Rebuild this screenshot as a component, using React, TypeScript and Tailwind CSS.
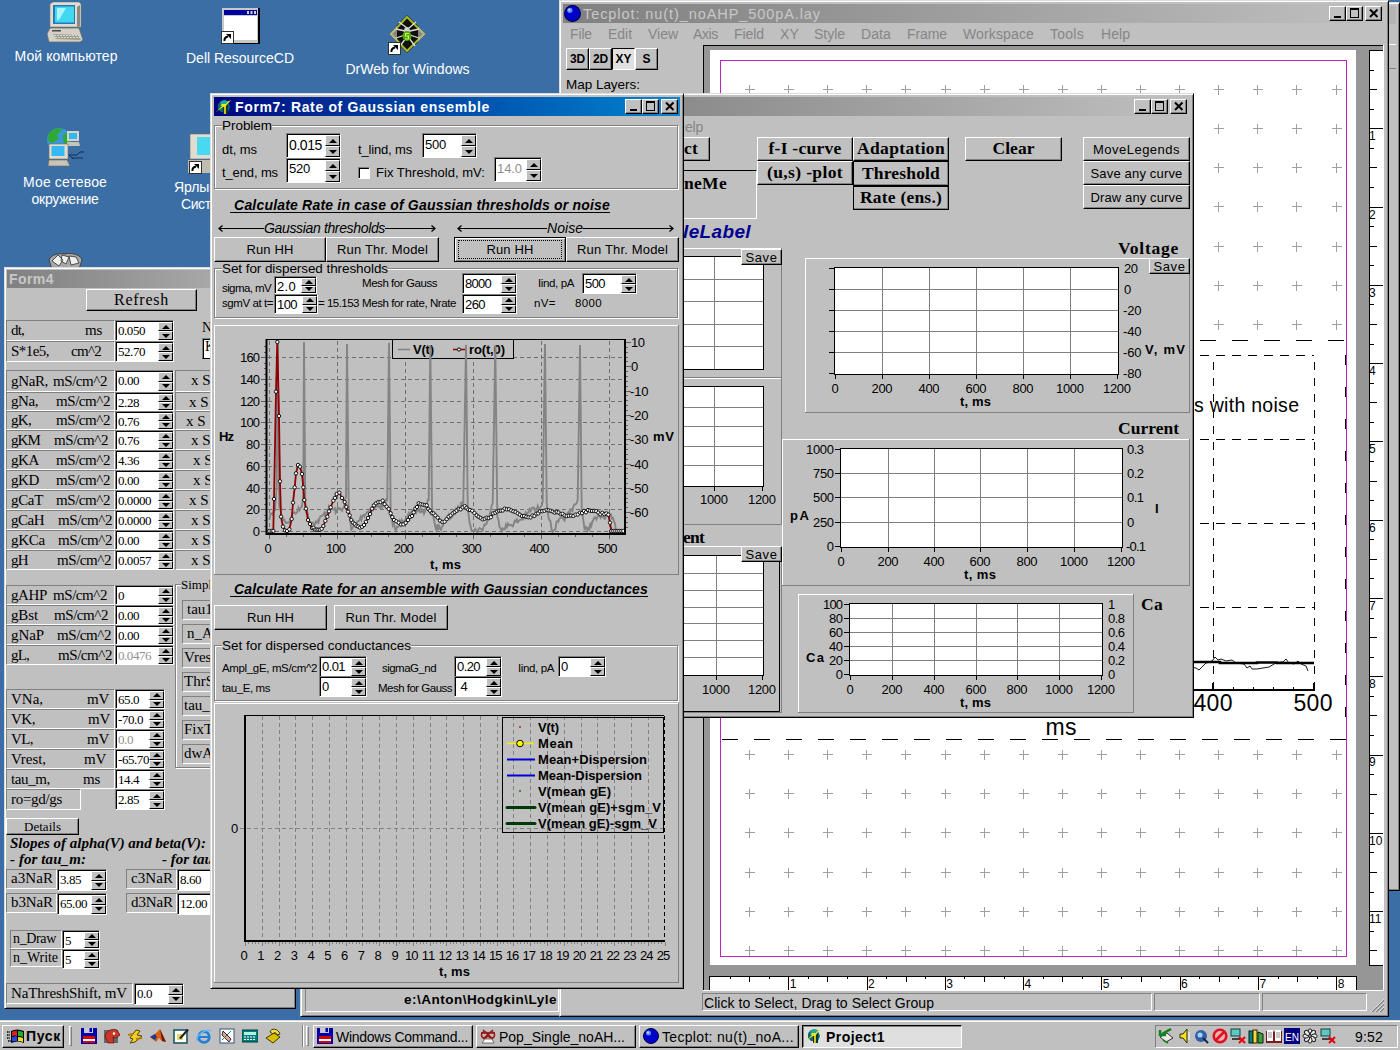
import React, { useLayoutEffect, useRef, useState } from "react";

const RAISED =
  "border border-t-white border-l-white border-r-black border-b-black shadow-[inset_-1px_-1px_0_#808080] bg-[#c0c0c0]";
const SUNK = "border border-t-[#808080] border-l-[#808080] border-r-white border-b-white";
const FRAME =
  "bg-[#c0c0c0] border border-t-[#dcdcdc] border-l-[#dcdcdc] border-r-black border-b-black shadow-[inset_1px_1px_0_#ffffff,inset_-1px_-1px_0_#808080] p-[3px]";

/* Text run whose letter spacing is tuned so that it is exactly w pixels wide. */
function T({ w, c = "", children }: { w?: number; c?: string; children: string }) {
  const ref = useRef<HTMLSpanElement>(null);
  const [ls, setLs] = useState(0);
  useLayoutEffect(() => {
    if (w && ref.current && ls === 0) {
      const nat = ref.current.getBoundingClientRect().width;
      setLs((w - nat) / children.length);
    }
  }, []);
  return (
    <span ref={ref} className={"inline-block flex-none whitespace-pre " + c} style={{ letterSpacing: ls }}>
      {children}
    </span>
  );
}

function Spin({ v, w, c, off = false, tw = "" }: { v: string; w?: number; c: string; off?: boolean; tw?: string }) {
  return (
    <div className={"flex flex-none border border-t-[#808080] border-l-[#808080] border-r-white border-b-white " + c}>
      <div className="flex min-w-0 flex-1 border-t border-l border-black bg-white">
        <div className={"min-w-0 flex-1 pl-px leading-[16px] " + (off ? "text-[#909090] " : "text-black ") + tw}>
          <T w={w}>{v}</T>
        </div>
        <div className="flex w-[15px] flex-none flex-col">
          {["M0 4 L4 0 L8 4Z", "M0 0 L8 0 L4 4Z"].map((d) => (
            <div
              key={d}
              className="flex min-h-0 flex-1 items-center justify-center border border-t-white border-l-white border-r-black border-b-black bg-[#c0c0c0]"
            >
              <svg width="8" height="4" viewBox="0 0 8 4">
                <path d={d} fill="#000" />
              </svg>
            </div>
          ))}
        </div>
      </div>
    </div>
  );
}

function Btn({ c, t, w, tc = "" }: { c: string; t: string; w?: number; tc?: string }) {
  return (
    <div className={"flex flex-none items-center justify-center " + RAISED + " " + c}>
      <T w={w} c={tc}>
        {t}
      </T>
    </div>
  );
}

function WinButtons({ c = "" }: { c?: string }) {
  const b = "flex h-[15px] w-[17px] items-center justify-center " + RAISED;
  return (
    <div className={"ml-auto flex flex-none items-center " + c}>
      <div className={b}>
        <svg width="12" height="11" viewBox="0 0 12 11" shapeRendering="crispEdges">
          <rect x="2" y="8" width="7" height="2" />
        </svg>
      </div>
      <div className={b}>
        <svg width="12" height="11" viewBox="0 0 12 11" shapeRendering="crispEdges">
          <path d="M1 0h9v10h-9zM2 2v7h7v-7z" fillRule="evenodd" />
        </svg>
      </div>
      <div className={"ml-[2px] " + b}>
        <svg width="12" height="11" viewBox="0 0 12 11">
          <path d="M2 1.500L9.500 9M9.500 1.500L2 9" stroke="#000" strokeWidth="2" />
        </svg>
      </div>
    </div>
  );
}

function Group({ t, w, c, children }: { t: string; w: number; c: string; children: React.ReactNode }) {
  return (
    <div
      className={
        "relative flex-none border border-[#808080] shadow-[1px_1px_0_#ffffff,inset_1px_1px_0_#ffffff] " + c
      }
    >
      <div className="absolute -top-[6px] left-[7px] bg-[#c0c0c0] text-[13.5px] leading-[12px]">
        <T w={w}>{t}</T>
      </div>
      {children}
    </div>
  );
}

/* ---------- svg helpers ---------- */
type L = [number, number, string, number?];
function Labels({ items, size = 13, anchor = "middle", bold = false }: { items: L[]; size?: number; anchor?: "middle" | "start" | "end"; bold?: boolean }) {
  return (
    <>
      {items.map(([x, y, s, w], i) => (
        <text
          key={i}
          x={x}
          y={y}
          fontSize={size}
          fontWeight={bold ? 700 : 400}
          textAnchor={anchor}
          textLength={w}
          lengthAdjust="spacing"
        >
          {s}
        </text>
      ))}
    </>
  );
}

function Plot(p: {
  box: [number, number, number, number];
  plot: [number, number, number, number];
  vx: number[];
  hy: number[];
  children?: React.ReactNode;
  xt?: number[];
  yt?: number[];
  c?: string;
}) {
  const [ox, oy, w, h] = p.box;
  const [x1, y1, x2, y2] = p.plot;
  return (
    <svg className={"block flex-none " + (p.c ?? "")} width={w} height={h} viewBox={`${ox} ${oy} ${w} ${h}`}>
      <g shapeRendering="crispEdges">
        <path d={`M${ox + 0.5} ${oy + h}V${oy + 0.5}H${ox + w}`} fill="none" stroke="#fff" />
        <path d={`M${ox} ${oy + h - 0.5}H${ox + w - 0.5}V${oy}`} fill="none" stroke="#808080" />
        <rect x={x1 + 0.5} y={y1 + 0.5} width={x2 - x1} height={y2 - y1} fill="#fff" stroke="#000" />
        {p.vx.map((x) => (
          <path key={x} d={`M${x + 0.5} ${y1 + 1}V${y2}`} stroke="#808080" />
        ))}
        {p.hy.map((y) => (
          <path key={y} d={`M${x1 + 1} ${y + 0.5}H${x2}`} stroke="#808080" />
        ))}
        {(p.xt ?? []).map((x) => (
          <path key={x} d={`M${x + 0.5} ${y2}V${y2 + 5}`} stroke="#000" />
        ))}
        {(p.yt ?? []).map((y) => (
          <path key={y} d={`M${x1} ${y + 0.5}H${x1 - 5}`} stroke="#000" />
        ))}
      </g>
      {p.children}
    </svg>
  );
}

/* ---------- icons ---------- */
const Ball = ({ s = 16 }: { s?: number }) => (
  <svg width={s} height={s} viewBox="0 0 16 16" className="flex-none">
    <circle cx="8" cy="8" r="7.500" fill="#0000c8" stroke="#000040" />
    <circle cx="5.500" cy="5" r="2.500" fill="#5a8cff" />
    <circle cx="5" cy="4.500" r="1" fill="#d0e0ff" />
  </svg>
);
const Delphi = () => (
  <svg width="16" height="16" viewBox="0 0 16 16" className="flex-none">
    <path d="M2 6C3 2 8 0 12 3L14 8 12 13H5L2 10z" fill="#0a6a6a" />
    <path d="M7 4h5v11H7z" fill="#083830" />
    <path d="M8 3h2v12H8z" fill="#d8c020" />
    <path d="M0 13L6 7 4 6 15 1 9 8 7 8z" fill="#e8e820" />
    <path d="M4 3l4-2 4 1-2 3H5z" fill="#20a8a0" />
  </svg>
);
const Floppy = () => (
  <svg width="16" height="16" viewBox="0 0 16 16" className="flex-none">
    <path d="M0 0h3v5h9V0h4v16H0z" fill="#0000a8" />
    <rect x="4" y="0" width="8" height="5" fill="#c8c8d8" />
    <rect x="8.500" y="0" width="2.500" height="4" fill="#0000a8" />
    <rect x="2" y="8" width="12" height="7" fill="#fff" />
    <rect x="2" y="8" width="12" height="3" fill="#d80000" />
    <rect x="2" y="13" width="12" height="2" fill="#d80000" />
  </svg>
);
const Monitor = () => (
  <svg width="38" height="41" viewBox="0 0 38 41" className="flex-none">
    <path d="M3 2L6 0H32L34 2V25H3z" fill="#e0ddd0" stroke="#807c70" strokeWidth=".6" />
    <path d="M33 3V24L30 26V5z" fill="#8c8a80" />
    <rect x="6" y="3" width="22" height="19" fill="#2878b8" />
    <rect x="8" y="4.500" width="19" height="16" fill="#40d8f0" />
    <path d="M10 6h9l-7 12h-2z" fill="#a8f4ff" />
    <path d="M3 26H32L36 38 33 40H2L0 32z" fill="#d4d0c8" stroke="#6a675c" strokeWidth=".7" />
    <path d="M6 32L31 33 34 38 9 37z" fill="#a09c90" />
    <path d="M7 33.500H32M8 35.500H33" stroke="#f4f2ec" strokeWidth=".7" strokeDasharray="2 1" />
    <rect x="5" y="28" width="9" height="1.500" fill="#4a4840" />
  </svg>
);
const Shortcut = ({ x, y }: { x: number; y: number }) => (
  <g>
    <rect x={x + 0.5} y={y + 0.5} width="12" height="12" fill="#fff" stroke="#303030" />
    <path d={`M${x + 3.500} ${y + 10}C${x + 3} ${y + 7} ${x + 5} ${y + 6} ${x + 7} ${y + 5.500}`} stroke="#000" strokeWidth="2" fill="none" />
    <path d={`M${x + 5} ${y + 3}H${x + 10}V${y + 8}z`} fill="#000" />
  </g>
);

/* ---------- Form4 ---------- */
function Row4(p: {
  l: string;
  lw: number;
  u?: string;
  uw?: number;
  ur?: number;
  v: string;
  vw: number;
  h: string;
  off?: boolean;
  sw?: string;
  x?: string;
  xp?: string;
  bw?: string;
}) {
  return (
    <div className={"flex flex-none " + p.h}>
      <div className="w-[109px] flex-none">
        <div className={"flex h-full items-center pl-1 " + SUNK + " " + (p.bw ?? "w-[109px]")}>
          <T w={p.lw}>{p.l}</T>
          {p.u && (
            <div className="ml-auto flex">
              <T w={p.uw ?? 54}>{p.u}</T>
              <div style={{ width: 113 - (p.ur ?? 109) }} />
            </div>
          )}
        </div>
      </div>
      <Spin v={p.v} w={p.vw} off={p.off} c={"h-full " + (p.sw ?? "w-[59px]")} tw="text-[13px] leading-[17px]" />
      {p.x && (
        <div className={"ml-px h-full flex-1 overflow-hidden leading-[18px] " + SUNK + " " + (p.xp ?? "pl-[15px]")}>
          <T>{p.x}</T>
        </div>
      )}
    </div>
  );
}

function Form4() {
  return (
    <div className={"absolute left-[4px] top-[267px] flex h-[742px] w-[292px] flex-col font-['Liberation_Serif',serif] text-[15px] " + FRAME + " !p-px"}>
      <div className="mx-px mt-px flex h-[18px] flex-none items-center bg-linear-to-r from-[#808080] to-[#b8b8b8] pl-[2px] font-['Liberation_Sans',sans-serif] text-[14px] font-bold text-[#c8c8c8]">
        <T w={45}>Form4</T>
      </div>
      <Btn c="ml-[80px] mt-[1px] h-[22px] w-[111px]" t="Refresh" w={55} tc="text-[16px]" />
      <div className="mt-[9px] flex">
        <div className="w-[168px] flex-none">
          <Row4 l="dt," lw={13} u="ms" uw={17} ur={101} v="0.050" vw={27} h="h-[21px]" />
          <Row4 l="S*1e5," lw={38} u="cm^2" uw={30} ur={100} v="52.70" vw={27} h="h-[21px]" />
        </div>
        <div className="ml-[28px] flex w-[80px] flex-col leading-[16px]">
          <span className="text-[14px]">NaK</span>
          <div className="mt-[2px] h-[21px] border border-t-[#808080] border-l-[#808080] bg-white pl-[2px] text-[14px] shadow-[inset_1px_1px_0_#000000]">K</div>
        </div>
      </div>
      <div className="mt-[8px] flex flex-col">
        <Row4 l="gNaR," lw={37} u="mS/cm^2" ur={106} v="0.00" vw={21} h="h-[22px]" x="x S" />
        <Row4 l="gNa," lw={27} u="mS/cm^2" v="2.28" vw={21} h="h-[19px]" x="x S" xp="pl-[13px]" />
        <Row4 l="gK," lw={20} u="mS/cm^2" v="0.76" vw={21} h="h-[19px]" x="x S =" xp="pl-[10px]" />
        <Row4 l="gKM" lw={29} u="mS/cm^2" ur={107} v="0.76" vw={21} h="h-[20px]" x="x S" />
        <Row4 l="gKA" lw={28} u="mS/cm^2" v="4.36" vw={21} h="h-[20px]" x="x S" xp="pl-[17px]" />
        <Row4 l="gKD" lw={28} u="mS/cm^2" v="0.00" vw={21} h="h-[20px]" x="x S" xp="pl-[17px]" />
        <Row4 l="gCaT" lw={32} u="mS/cm^2" v="0.0000" vw={33} h="h-[20px]" x="x S" xp="pl-[13px]" />
        <Row4 l="gCaH" lw={33} u="mS/cm^2" ur={111} v="0.0000" vw={33} h="h-[20px]" x="x S" />
        <Row4 l="gKCa" lw={34} u="mS/cm^2" ur={111} v="0.00" vw={21} h="h-[20px]" x="x S" />
        <Row4 l="gH" lw={17} u="mS/cm^2" ur={110} v="0.0057" vw={33} h="h-[20px]" x="x S" />
      </div>
      <div className="mt-[7px] flex h-[240px] flex-none">
        <div className="w-[168px] flex-none pt-[8px]">
          <Row4 l="gAHP" lw={36} u="mS/cm^2" ur={106} v="0" vw={7} h="h-[20px]" />
          <Row4 l="gBst" lw={27} u="mS/cm^2" ur={107} v="0.00" vw={21} h="h-[20px]" />
          <Row4 l="gNaP" lw={33} u="mS/cm^2" ur={110} v="0.00" vw={21} h="h-[20px]" />
          <Row4 l="gL," lw={18} u="mS/cm^2" ur={111} v="0.0476" vw={33} h="h-[20px]" off />
          <div className="h-[24px]" />
          <Row4 l="VNa," lw={32} u="mV" uw={22} ur={108} v="65.0" vw={21} h="h-[20px]" sw="w-[50px]" />
          <Row4 l="VK," lw={24} u="mV" uw={22} v="-70.0" vw={25} h="h-[20px]" sw="w-[50px]" />
          <Row4 l="VL," lw={22} u="mV" uw={22} ur={108} v="0.0" vw={15} h="h-[20px]" sw="w-[50px]" off />
          <Row4 l="Vrest," lw={35} u="mV" uw={22} ur={105} v="-65.70" vw={31} h="h-[20px]" sw="w-[50px]" />
          <Row4 l="tau_m," lw={39} u="ms" uw={17} ur={99} v="14.4" vw={21} h="h-[20px]" sw="w-[50px]" />
          <Row4 l="ro=gd/gs" lw={51} v="2.85" vw={21} h="h-[21px]" sw="w-[50px]" bw="w-[75px]" />
        </div>
        <div className="relative ml-px mt-[7px] flex h-[184px] w-[100px] flex-col border border-[#808080] pl-[6px] pt-[15px] shadow-[inset_1px_1px_0_#ffffff,1px_1px_0_#ffffff]">
          <span className="absolute -top-[9px] left-[5px] bg-[#c0c0c0] text-[13px] leading-[18px]">Simpl</span>
          {["tau1", "n_A", "Vrest", "ThrS", "tau_", "FixThr", "dwA"].map((s, i) => (
            <div key={s} className={"mb-[4px] h-[20px] flex-none leading-[16px] " + SUNK + (i < 2 ? " pl-[4px]" : " pl-px")}>
              <T>{s}</T>
            </div>
          ))}
        </div>
      </div>
      <Btn c="mt-[1px] h-[17px] w-[73px]" t="Details" w={37} tc="text-[13px]" />
      <div className="pl-1 font-bold italic leading-[16px]">
        <T w={196}>Slopes of alpha(V) and beta(V):</T>
      </div>
      <div className="mb-[2px] flex pl-1 font-bold italic leading-[16px]">
        <T w={76}>- for tau_m:</T>
        <T c="ml-[76px]">- for tau_h:</T>
      </div>
      {[
        ["a3NaR", "3.85", 21, "c3NaR", "8.60", 21],
        ["b3NaR", "65.00", 27, "d3NaR", "12.00", 27],
      ].map((r) => (
        <div key={r[0] as string} className="mb-[2px] flex h-[22px] flex-none">
          <div className={"h-[20px] w-[51px] pl-1 leading-[17px] " + SUNK}>
            <T w={42}>{r[0] as string}</T>
          </div>
          <Spin v={r[1] as string} w={r[2] as number} c="h-full w-[50px]" tw="text-[13px] !leading-[18px]" />
          <div className={"ml-[19px] h-[20px] w-[51px] pl-1 leading-[17px] " + SUNK}>
            <T w={42}>{r[3] as string}</T>
          </div>
          <Spin v={r[4] as string} w={r[5] as number} c="h-full w-[50px]" tw="text-[13px] !leading-[18px]" />
        </div>
      ))}
      <div className="ml-1 mt-[13px] flex flex-col text-[14px]">
        <div className="flex h-[19px]">
          <div className={"h-[19px] w-[52px] pl-[2px] leading-[16px] " + SUNK}>
            <T w={43}>n_Draw</T>
          </div>
          <Spin v="5" c="h-full w-[38px]" tw="text-[13px] !leading-[18px]" />
        </div>
        <div className="flex h-[20px]">
          <div className={"h-[18px] w-[52px] pl-[2px] leading-[15px] " + SUNK}>
            <T w={45}>n_Write</T>
          </div>
          <Spin v="5" c="h-full w-[38px]" tw="text-[13px] !leading-[18px]" />
        </div>
      </div>
      <div className="mt-[14px] flex h-[22px]">
        <div className={"h-[21px] w-[127px] pl-1 leading-[18px] " + SUNK}>
          <T w={116}>NaThreshShift, mV</T>
        </div>
        <Spin v="0.0" w={15} c="ml-px h-full w-[50px]" tw="text-[13px] !leading-[18px]" />
      </div>
    </div>
  );
}

/* ---------- Tecplot ---------- */
const MENU: [string, number][] = [
  ["File", 38], ["Edit", 40], ["View", 45], ["Axis", 41], ["Field", 46], ["XY", 34], ["Style", 47], ["Data", 46], ["Frame", 56], ["Workspace", 87], ["Tools", 51], ["Help", 40],
];
const MENUW = [22, 24, 30, 25, 30, 19, 31, 30, 40, 71, 34, 29];

function Canvas() {
  const cross: React.ReactNode[] = [];
  for (let r = 0; r < 23; r++)
    for (let c = 0; c < 16; c++) {
      const x = Math.round(749 + c * 39.1) + 0.5;
      const y = Math.round(89 + r * 39.13) + 0.5;
      if (y > 340 && y < 738) continue;
      cross.push(<path key={r + "-" + c} d={`M${x - 5} ${y}h10M${x} ${y - 5}v10`} />);
    }
  const vt: React.ReactNode[] = [];
  for (let i = 0; i <= 46; i++) {
    const y = Math.round(50 + i * 19.57) + 0.5;
    const len = i % 4 === 0 ? 13 : i % 2 === 0 ? 7 : 4;
    if (i && y < 964) vt.push(<path key={i} d={`M1370 ${y}h${len}`} />);
  }
  const ht: React.ReactNode[] = [];
  for (let i = 1; i <= 32; i++) {
    const x = Math.round(710 + i * 19.57) + 0.5;
    const len = i % 4 === 0 ? 14 : i % 2 === 0 ? 6 : 3;
    ht.push(<path key={i} d={`M${x} 976v${len}`} />);
  }
  return (
    <svg className="block flex-none" width="681" height="946" viewBox="703 45 681 946">
      <rect x="703" y="45" width="681" height="946" fill="#969696" />
      <path d="M703.500 991V45.500H1384" fill="none" stroke="#000" shapeRendering="crispEdges" />
      <rect x="710" y="50" width="646" height="915" fill="#fff" />
      <g stroke="#a0a0a0" shapeRendering="crispEdges">{cross}</g>
      <g shapeRendering="crispEdges" fill="none" stroke="#000">
        <path d="M721 340.500H1346" strokeDasharray="16 16" strokeDashoffset="1" />
        <path d="M722 739.500H1346" strokeDasharray="16 16" />
        <path d="M1345.500 355V737M720.500 718V737" strokeDasharray="10 22" />
        <path d="M1184 355.500H1314M1184 439.500H1314M1184 523.500H1314M1184 607.500H1314" strokeDasharray="9 7" />
        <path d="M1213.500 362V690M1314.500 362V690" strokeDasharray="8 8" />
        <path d="M1180 690H1315" strokeWidth="2" />
        <path d="M1213 683v7M1314 683v7" strokeWidth="2" />
        <path d="M1233.500 687v3M1253.500 687v3M1273.500 687v3M1293.500 687v3" />
      </g>
      <rect x="720.500" y="60.500" width="626" height="896" fill="none" stroke="#c020c0" shapeRendering="crispEdges" />
      <path d="M1180 662H1220V663H1257V662.500H1277V663H1314" fill="none" stroke="#000" strokeWidth="2.600" />
      <path
        d="M1190 667l6 1 3 2 4-4 3-3 4-1 3-2 2-3 3 3 3-1 5 2 6-1 4 3 8 1 3 4 3-2 2 3 5 0 6-1 6-1 5-3 6-2 3 0 3-3 3 4 5 1 4-3 3 3 5 2 2 5"
        fill="none"
        stroke="#000"
        strokeWidth=".9"
      />
      <text x="1194" y="411.500" fontSize="19.500" textLength="105" lengthAdjust="spacing">s with noise</text>
      <text x="1213" y="711" fontSize="23" textAnchor="middle" textLength="39">400</text>
      <text x="1313" y="711" fontSize="23" textAnchor="middle" textLength="39">500</text>
      <text x="1061" y="735" fontSize="23" textAnchor="middle" textLength="31">ms</text>
      <rect x="1370" y="51" width="14" height="914" fill="#fff" />
      <rect x="710" y="976" width="647" height="14" fill="#fff" />
      <g stroke="#000" fill="none" shapeRendering="crispEdges">
        <path d="M1384 50.500H1369.500V965.500H1384" />
        <path d="M709.500 990V976.500H1356.500V990" />
        {vt}
        {ht}
      </g>
      {[1, 2, 3, 4, 5, 6, 7, 8, 9, 10, 11].map((n) => (
        <text key={n} x="1369" y={62 + n * 78.27} fontSize="12">{n}</text>
      ))}
      {[1, 2, 3, 4, 5, 6, 7, 8].map((n) => (
        <text key={n} x={711.500 + n * 78.27} y="988" fontSize="12">{n}</text>
      ))}
      <path d="M1383.500 45V991M703 990.500H1384" stroke="#fff" shapeRendering="crispEdges" />
    </svg>
  );
}

function Tecplot() {
  return (
    <div className={"absolute left-[559px] top-0 flex h-[1017px] w-[830px] flex-col " + FRAME}>
      <div className="flex h-[19px] flex-none items-center bg-linear-to-r from-[#808080] to-[#c0c0c0] pl-px pr-[3px] text-[#c8c8c8]">
        <Ball s={17} />
        <T w={238} c="ml-[2px] pt-px text-[14.5px]">Tecplot: nu(t)_noAHP_500pA.lay</T>
        <WinButtons />
      </div>
      <div className="flex h-[22px] flex-none items-center pb-px pl-[7px] text-[14px] text-[#868686]">
        {MENU.map(([m, w], i) => (
          <div key={m} className="flex-none" style={{ width: w }}>
            <T w={MENUW[i]}>{m}</T>
          </div>
        ))}
      </div>
      <div className="flex h-[946px] flex-none">
        <div className="w-[140px] flex-none pl-[3px] pt-[3px]">
          <div className="flex text-[12px] font-bold">
            <Btn c="h-[22px] w-[23px]" t="3D" w={15} />
            <Btn c="h-[22px] w-[23px]" t="2D" w={15} />
            <div className="flex h-[22px] w-[23px] items-center justify-center border border-t-black border-l-black border-r-white border-b-white bg-[#e0e0e0]">
              <T w={16}>XY</T>
            </div>
            <Btn c="h-[22px] w-[23px]" t="S" />
          </div>
          <div className="mt-[7px] pt-px text-[13.5px]">
            <T w={74}>Map Layers:</T>
          </div>
        </div>
        <Canvas />
      </div>
      <div className="flex min-h-0 flex-1 pb-[2px] pl-[139px] pt-[2px]">
        <div className={"w-[450px] pl-px text-[14px] leading-[19px] " + SUNK}>
          <T w={230}>Click to Select, Drag to Select Group</T>
        </div>
        <div className={"ml-[2px] w-[106px] " + SUNK} />
        <div className={"ml-[2px] w-[105px] " + SUNK} />
        <svg width="14" height="14" viewBox="0 0 14 14" className="ml-[3px] mt-[5px]">
          <path d="M2 14L14 2M6 14L14 6M10 14L14 10" stroke="#808080" strokeWidth="1.500" />
          <path d="M1 14L14 1M5 14L14 5M9 14L14 9" stroke="#fff" strokeWidth=".6" />
        </svg>
      </div>
    </div>
  );
}

/* ---------- Project1 ---------- */
function Project1() {
  const sb = "absolute h-[16px] w-[41px]";
  const serifB = "font-['Liberation_Serif',serif] text-[17.5px] font-bold";
  return (
    <div className={"absolute left-[560px] top-[93px] flex h-[625px] w-[634px] flex-col " + FRAME}>
      <div className="flex h-[19px] flex-none items-center bg-linear-to-r from-[#808080] to-[#c0c0c0] pr-[3px]">
        <WinButtons />
      </div>
      <div className="flex h-[21px] flex-none items-center pl-[111px] text-[14px] text-[#868686]">
        <T w={28}>Help</T>
      </div>
      <div className={"flex h-[103px] flex-none " + serifB}>
        <div className="flex w-[193px] flex-none flex-col">
          <div className={"flex h-[24px] w-[146px] flex-none items-center justify-end pr-[11px] " + RAISED}>
            <T w={14}>ct</T>
          </div>
          <div className="mt-[9px] h-[49px] flex-none border border-t-black border-r-white border-b-white pl-[119px] leading-[24px]">
            <T w={43}>neMe</T>
          </div>
          <div className="mt-[3px] pl-[119px] font-['Liberation_Sans',sans-serif] text-[19px] italic leading-[20px] text-[#000090]">
            <T w={68}>leLabel</T>
          </div>
        </div>
        <div>
          <Btn c="h-[24px] w-[96px]" t="f-I -curve" w={73} />
          <Btn c="h-[24px] w-[96px]" t="(u,s) -plot" w={76} />
        </div>
        <div>
          <Btn c="h-[24px] w-[96px]" t="Adaptation" w={88} />
          <Btn c="h-[25px] w-[96px] !border-black" t="Threshold" w={78} />
          <Btn c="h-[24px] w-[96px] !border-black" t="Rate (ens.)" w={82} />
        </div>
        <Btn c="ml-[16px] h-[24px] w-[97px]" t="Clear" w={42} />
        <div className="ml-[21px] font-['Liberation_Sans',sans-serif] text-[13px] font-normal">
          <Btn c="h-[24px] w-[107px]" t="MoveLegends" w={87} />
          <Btn c="h-[24px] w-[107px]" t="Save any curve" w={92} />
          <Btn c="h-[24px] w-[107px]" t="Draw any curve" w={92} />
        </div>
      </div>
      <div className="flex flex-none">
        <div className="w-[218px] flex-none pt-[8px]">
          <div className="relative">
            <Plot box={[564, 248, 218, 130]} plot={[600, 256, 763, 369]} vx={[714]} hy={[279, 301, 324, 346]} />
            <Btn c={sb + " right-0 top-[1px]"} t="Save" w={32} />
          </div>
          <Plot box={[564, 378, 218, 147]} plot={[600, 386, 763, 486]} vx={[714]} hy={[407, 426, 446, 465]} xt={[714, 762]}>
            <Labels items={[[714, 504, "1000", 28], [762, 504, "1200", 28]]} />
          </Plot>
          <div className={"h-[21px] pl-[119px] leading-[24px] " + serifB}>
            <T w={21}>ent</T>
          </div>
          <div className="relative">
            <Plot box={[564, 546, 218, 167]} plot={[600, 555, 763, 675]} vx={[716]} hy={[573, 590, 607, 623, 640, 657]} xt={[716, 762]}>
              <path d="M600 711.500H779.500V560" stroke="#000" fill="none" />
              <Labels items={[[716, 694, "1000", 28], [762, 694, "1200", 28]]} />
            </Plot>
            <Btn c={sb + " right-0 top-[0px]"} t="Save" w={32} />
          </div>
        </div>
        <div className="w-[408px] flex-none">
          <div className={"h-[18px] pl-[336px] leading-[17px] " + serifB}>
            <T w={61}>Voltage</T>
          </div>
          <div className="relative">
            <Plot
              c="ml-[23px]"
              box={[805, 258, 385, 155]}
              plot={[834, 267, 1118, 374]}
              vx={[882, 929, 976, 1023, 1070]}
              hy={[289, 310, 331, 352]}
              xt={[835, 882, 929, 976, 1023, 1070, 1117]}
              yt={[268, 289, 310, 331, 352, 373]}
            >
              <Labels items={[[835, 393, "0"], [882, 393, "200", 21], [929, 393, "400", 21], [976, 393, "600", 21], [1023, 393, "800", 21], [1070, 393, "1000", 28], [1117, 393, "1200", 28]]} />
              <Labels anchor="start" items={[[1124, 273, "20", 14], [1124, 294, "0"], [1123, 315, "-20", 18.500], [1123, 336, "-40", 18.500], [1123, 357, "-60", 18.500], [1123, 378, "-80", 18.500]]} />
              <Labels bold anchor="start" items={[[1145, 354, "V, mV", 40], [960, 406, "t, ms", 31]]} />
            </Plot>
            <Btn c={sb + " right-0 top-0"} t="Save" w={32} />
          </div>
          <div className={"h-[26px] pl-[336px] leading-[30px] " + serifB}>
            <T w={61}>Current</T>
          </div>
          <Plot
            box={[782, 439, 408, 147]}
            plot={[840, 448, 1122, 547]}
            vx={[888, 934, 980, 1027, 1074]}
            hy={[473, 497, 522]}
            xt={[841, 888, 934, 980, 1027, 1074, 1121]}
            yt={[449, 473, 497, 522, 546]}
          >
            <Labels items={[[841, 566, "0"], [888, 566, "200", 21], [934, 566, "400", 21], [980, 566, "600", 21], [1027, 566, "800", 21], [1074, 566, "1000", 28], [1121, 566, "1200", 28]]} />
            <Labels anchor="end" items={[[834, 454, "1000", 28], [834, 478, "750", 21], [834, 502, "500", 21], [834, 527, "250", 21], [834, 551, "0"]]} />
            <Labels anchor="start" items={[[1127, 454, "0.3", 17], [1127, 478, "0.2", 17], [1127, 502, "0.1", 17], [1127, 527, "0"], [1126, 551, "-0.1", 20]]} />
            <Labels bold anchor="start" items={[[790, 520, "pA", 19], [964, 579, "t, ms", 32], [1155, 513, "I"]]} />
          </Plot>
          <div className="mt-[8px] flex pl-[16px]">
            <Plot
              box={[798, 594, 336, 119]}
              plot={[849, 603, 1102, 675]}
              vx={[892, 934, 976, 1017, 1059]}
              hy={[618, 632, 646, 660]}
              xt={[850, 892, 934, 976, 1017, 1059, 1101]}
              yt={[604, 618, 632, 646, 660, 674]}
            >
              <Labels items={[[850, 694, "0"], [892, 694, "200", 21], [934, 694, "400", 21], [976, 694, "600", 21], [1017, 694, "800", 21], [1059, 694, "1000", 28], [1101, 694, "1200", 28]]} />
              <Labels anchor="end" items={[[843, 609, "100", 20], [843, 623, "80", 14], [843, 637, "60", 14], [843, 651, "40", 14], [843, 665, "20", 14], [843, 679, "0"]]} />
              <Labels anchor="start" items={[[1108, 609, "1"], [1108, 623, "0.8", 17], [1108, 637, "0.6", 17], [1108, 651, "0.4", 17], [1108, 665, "0.2", 17], [1108, 679, "0"]]} />
              <Labels bold anchor="start" items={[[806, 662, "Ca", 18], [960, 707, "t, ms", 31]]} />
            </Plot>
            <T w={22} c={"ml-[7px] leading-[20px] " + serifB}>Ca</T>
          </div>
        </div>
      </div>
    </div>
  );
}

/* ---------- Form7 ---------- */
/* Curve knots, in thirds of a pixel from the chart's origin at (210, 320). */
const RO: number[][] = [[178,633],[185,633],[190,633],[192,537],[198,215],[202,66],[207,288],[210,484],[213,590],[219,620],[225,631],[231,633],[238,628],[245,597],[249,548],[254,502],[258,460],[264,435],[270,440],[276,462],[280,502],[283,540],[288,566],[294,600],[300,612],[306,624],[315,629],[330,629],[340,618],[352,590],[362,562],[370,542],[380,522],[388,518],[396,534],[404,546],[414,575],[424,600],[434,612],[450,623],[462,615],[474,594],[486,566],[498,550],[518,542],[530,560],[542,580],[552,600],[566,608],[580,613],[594,600],[606,588],[616,566],[626,550],[650,556],[660,572],[676,586],[690,602],[704,605],[722,586],[740,572],[764,558],[780,570],[800,586],[818,598],[836,594],[856,578],[884,566],[910,574],[936,588],[962,592],[990,574],[1010,570],[1040,576],[1070,588],[1090,588],[1110,578],[1140,572],[1165,578],[1195,584],[1200,608],[1204,633],[1240,633]];
const VT: number[][] = [[178,600],[185,580],[195,570],[200,500],[203,70],[208,560],[220,600],[235,608],[250,580],[262,575],[275,560],[280,520],[282,66],[286,560],[300,605],[320,608],[340,585],[360,565],[380,572],[402,562],[408,530],[411,72],[416,560],[424,630],[440,610],[460,585],[480,570],[500,560],[520,555],[532,540],[537,68],[542,590],[558,632],[575,600],[600,585],[625,570],[645,575],[656,540],[661,75],[666,560],[676,620],[690,625],[710,600],[735,580],[760,545],[768,75],[773,560],[782,620],[790,632],[815,628],[835,600],[848,550],[856,75],[862,590],[872,625],[900,615],[930,600],[950,585],[965,565],[980,570],[998,545],[1005,72],[1010,550],[1018,600],[1028,635],[1045,605],[1070,590],[1090,560],[1103,540],[1110,75],[1115,570],[1124,630],[1135,625],[1150,600],[1175,590],[1200,590],[1212,605],[1220,630]];
function densify(k: number[][], step: number, amp: number) {
  const out: number[][] = [];
  let seed = 7;
  const rnd = () => {
    seed = (seed * 16807) % 2147483647;
    return seed / 2147483647 - 0.5;
  };
  k.forEach((p, i) => {
    out.push(p);
    const q = k[i + 1];
    if (!q || Math.abs(q[1] - p[1]) > 60) return;
    const n = Math.round((q[0] - p[0]) / step);
    for (let j = 1; j < n; j++) {
      const f = j / n;
      const flat = p[1] > 628 && q[1] > 628;
      out.push([p[0] + (q[0] - p[0]) * f, p[1] + (q[1] - p[1]) * f + (flat ? 0 : rnd() * amp)]);
    }
  });
  return out.map(([x, y]) => [210 + x / 3, 320 + y / 3]);
}
const ro = densify(RO, 6, 7);
const vt = densify(VT, 3, 18);
const pts = (a: number[][]) => a.map((p) => p[0].toFixed(1) + "," + p[1].toFixed(1)).join(" ");

function RateChart() {
  const xs = [0, 100, 200, 300, 400, 500];
  return (
    <svg className="block flex-none" width="465" height="250" viewBox="214 325 465 250">
      <g shapeRendering="crispEdges" fill="none">
        <path d="M214.500 575V325.500H679" stroke="#fff" />
        <path d="M214 574.500H678.500V325" stroke="#808080" />
        <g stroke="#707070" strokeDasharray="4 3">
          {xs.map((v) => <path key={v} d={`M${Math.round(269 + v * 0.679) + 0.5} 341V533`} />)}
          {[0, 1, 2, 3, 4, 5, 6, 7, 8].map((i) => <path key={i} d={`M268 ${Math.round(531 - i * 21.72) + 0.5}H624`} />)}
        </g>
        <g stroke="#606060">
          {xs.map((v) => <path key={v} d={`M${Math.round(269 + v * 0.679) + 0.5} 535v4`} />)}
          {Array.from({ length: 21 }, (_, i) => <path key={i} d={`M${Math.round(269 + i * 17) + 0.5} 535v2`} />)}
          {[0, 1, 2, 3, 4, 5, 6, 7, 8].map((i) => <path key={i} d={`M261 ${Math.round(531 - i * 21.72) + 0.5}h5`} />)}
          {Array.from({ length: 35 }, (_, i) => <path key={i} d={`M264 ${Math.round(531 - i * 5.43) + 0.5}h2`} />)}
          {[0, 1, 2, 3, 4, 5, 6, 7].map((i) => <path key={i} d={`M626 ${Math.round(342 + i * 24.3) + 0.5}h5`} />)}
          {Array.from({ length: 39 }, (_, i) => <path key={i} d={`M626 ${Math.round(342 + i * 4.86) + 0.5}h2`} />)}
        </g>
      </g>
      <rect x="392.500" y="339.500" width="121" height="19" fill="#c0c0c0" stroke="#000" />
      <path d="M398 349.500H410" stroke="#808080" strokeWidth="1.500" />
      <Labels bold anchor="start" items={[[413, 354, "V(t)", 21], [469, 354, "ro(t,0)", 36]]} />
      <path d="M453 349.500H465" stroke="#900000" strokeWidth="1.500" />
      <circle cx="459" cy="349.500" r="1.600" fill="#fff" stroke="#000" />
      <polyline points={pts(vt)} fill="none" stroke="#848484" strokeWidth="1.900" />
      <polyline points={pts(ro)} fill="none" stroke="#900000" strokeWidth="1.800" />
      {ro.map((p, i) => (
        <circle key={i} cx={p[0]} cy={p[1]} r="1.700" fill="#fff" stroke="#000" strokeWidth=".9" />
      ))}
      <path d="M266 339.500H625" stroke="#000" strokeWidth="1" />
      <path d="M266.500 339V534H625V339" fill="none" stroke="#000" strokeWidth="2" />
      <Labels items={xs.map((v): L => [268 + v * 0.679, 553, String(v), v ? 20 : undefined])} />
      <Labels anchor="end" items={[0, 1, 2, 3, 4, 5, 6, 7, 8].map((i): L => [260, 536 - i * 21.72, String(i * 20), i === 0 ? undefined : i < 5 ? 14 : 20])} />
      <Labels anchor="start" items={[[631, 347, "10", 14], [631, 371, "0"], [630, 396, "-10", 18.500], [630, 420, "-20", 18.500], [630, 444, "-30", 18.500], [630, 469, "-40", 18.500], [630, 493, "-50", 18.500], [630, 517, "-60", 18.500]]} />
      <Labels bold anchor="start" items={[[219, 441, "Hz", 15], [653, 441, "mV", 21], [430, 569, "t, ms", 31]]} />
    </svg>
  );
}

function CondChart() {
  const lx = (i: number) => Math.round(245 + i * 16.78) + 0.5;
  const leg: [string, number][] = [["V(t)", 21], ["Mean", 35], ["Mean+Dispersion", 109], ["Mean-Dispersion", 104], ["V(mean gE)", 73], ["V(mean gE)+sgm_V", 123], ["V(mean gE)-sgm_V", 119]];
  return (
    <svg className="block flex-none" width="465" height="280" viewBox="214 703 465 280">
      <g shapeRendering="crispEdges" fill="none">
        <path d="M214.500 983V703.500H679" stroke="#fff" />
        <path d="M214 982.500H678.500V703" stroke="#808080" />
        <path d="M240 828.500H664" stroke="#808080" strokeDasharray="4 3" />
        {Array.from({ length: 24 }, (_, i) => (
          <path key={i} d={`M${lx(i + 1)} 716V940`} stroke="#808080" strokeDasharray="4 3" />
        ))}
        {Array.from({ length: 126 }, (_, i) => (
          <path key={i} d={`M${Math.round(245 + i * 3.356) + 0.5} 942v${i % 5 ? 2 : 4}`} stroke="#808080" />
        ))}
        <path d="M245 715.500H664" stroke="#000" />
        <path d="M245 715V941.200H665" stroke="#000" strokeWidth="2" />
        <path d="M664.500 716V941" stroke="#000" strokeDasharray="4 3" />
        <rect x="502.500" y="717.500" width="161" height="115" stroke="#000" />
      </g>
      <circle cx="520" cy="727" r="1" fill="#c02020" />
      <path d="M507 743.500H534" stroke="#f0f000" strokeWidth="1.500" />
      <circle cx="520" cy="743.500" r="3.300" fill="#ff0" stroke="#000" />
      <path d="M507 759.500H535M507 775.500H535" stroke="#0000d8" strokeWidth="2" />
      <circle cx="520" cy="791" r="1" fill="#207020" />
      <path d="M507 807.500H535M507 823.500H535" stroke="#003808" strokeWidth="3" strokeLinecap="round" />
      <Labels bold anchor="start" items={leg.map(([s, w], i): L => [538, 732 + i * 16, s, w])} />
      <Labels items={Array.from({ length: 26 }, (_, i): L => [244 + i * 16.78, 960, String(i), i > 9 ? 13.5 : undefined])} />
      <Labels anchor="start" items={[[231, 833, "0"]]} />
      <Labels bold anchor="start" items={[[439, 976, "t, ms", 31]]} />
    </svg>
  );
}

function ArrowLine({ t, w, c, a, b }: { t: string; w: number; c: string; a: string; b: string }) {
  return (
    <div className={"flex items-center " + c}>
      <div className={"flex h-[7px] items-center " + a}>
        <svg width="5" height="7" viewBox="0 0 5 7"><path d="M4.500 .5L1 3.500 4.500 6.500" fill="none" stroke="#000" strokeWidth="1.300" /></svg>
        <div className="-ml-[3px] h-px flex-1 bg-black" />
      </div>
      <T w={w} c="italic text-[14px]">{t}</T>
      <div className={"flex h-[7px] items-center " + b}>
        <div className="-mr-[3px] h-px flex-1 bg-black" />
        <svg width="5" height="7" viewBox="0 0 5 7"><path d="M.5 .5L4 3.500 .5 6.500" fill="none" stroke="#000" strokeWidth="1.300" /></svg>
      </div>
    </div>
  );
}

function Form7() {
  return (
    <div className={"absolute left-[210px] top-[93px] flex h-[896px] w-[474px] flex-col " + FRAME}>
      <div className="flex h-[19px] flex-none items-center bg-linear-to-r from-[#000080] to-[#1084d0] pl-[2px] pr-[2px] text-white">
        <Delphi />
        <T w={255} c="ml-[3px] pt-px text-[14px] font-bold">Form7: Rate of Gaussian ensemble</T>
        <WinButtons />
      </div>
      <Group t="Problem" w={50} c="mt-[9px] h-[64px] w-[464px] pl-[7px] pt-[7px]">
        <div className="flex h-[25px]">
          <T w={35} c="mt-[8px] leading-[18px]">dt, ms</T>
          <Spin v="0.015" w={33} c="ml-[29px] h-[25px] w-[55px]" tw="text-[14px] !leading-[20px]" />
          <T w={54} c="ml-[17px] mt-[8px] leading-[18px]">t_lind, ms</T>
          <Spin v="500" w={21} c="ml-[10px] h-[25px] w-[55px]" tw="!leading-[20px]" />
        </div>
        <div className="flex h-[25px]">
          <T w={56} c="mt-[6px] leading-[18px]">t_end, ms</T>
          <Spin v="520" w={21} c="ml-[8px] h-[25px] w-[55px]" tw="!leading-[18px]" />
          <div className="ml-[17px] mt-[9px] h-[12px] w-[12px] border border-[#808080] border-r-white border-b-white bg-white shadow-[inset_1px_1px_0_#000000]" />
          <T w={109} c="ml-[6px] mt-[6px] leading-[18px]">Fix Threshold, mV:</T>
          <Spin v="14.0" w={25} off c="ml-[9px] -mt-px h-[25px] w-[48px]" tw="!leading-[20px]" />
        </div>
      </Group>
      <div className="mt-[6px] pl-[16px] text-[14px] font-bold italic leading-[20px]">
        <T w={380} c="underline underline-offset-2">{" Calculate Rate in case of Gaussian thresholds or noise"}</T>
      </div>
      <div className="mt-[5px] flex h-[16px] items-center pl-[4px]">
        <ArrowLine t="Gaussian thresholds" w={121} c="w-[218px]" a="w-[46px]" b="w-[51px]" />
        <ArrowLine t="Noise" w={36} c="ml-[21px] w-[218px]" a="w-[90px]" b="w-[91px]" />
      </div>
      <div className="mt-[1px] flex h-[25px]">
        <Btn c="h-full w-[112px]" t="Run HH" w={47} />
        <Btn c="h-full w-[113px]" t="Run Thr. Model" w={91} />
        <div className="ml-[15px] flex h-full w-[112px] items-center justify-center border border-black bg-[#c0c0c0] shadow-[inset_1px_1px_0_#ffffff,inset_-1px_-1px_0_#808080]">
          <div className="flex h-[19px] w-[104px] items-center justify-center border border-dotted border-black">
            <T w={47}>Run HH</T>
          </div>
        </div>
        <Btn c="h-full w-[113px]" t="Run Thr. Model" w={91} />
      </div>
      <Group t="Set for dispersed thresholds" w={166} c="mt-[6px] h-[50px] w-[464px] pl-[7px] pt-[4px] text-[11.5px]">
        <div className="flex h-[20px]">
          <T w={49} c="mt-[7px] leading-[16px]">sigma, mV</T>
          <Spin v="2.0" w={19} c="ml-[3px] mt-[3px] h-[18px] w-[43px]" tw="text-[13px] !leading-[17px]" />
          <T w={75} c="ml-[45px] mt-[2px] leading-[16px]">Mesh for Gauss</T>
          <Spin v="8000" w={26} c="ml-[25px] h-[21px] w-[55px]" tw="text-[13px] !leading-[18px]" />
          <T w={36} c="ml-[21px] mt-[2px] leading-[16px]">Iind, pA</T>
          <Spin v="500" w={20} c="ml-[8px] h-[21px] w-[55px]" tw="text-[13px] !leading-[18px]" />
        </div>
        <div className="flex h-[21px]">
          <T w={51} c="mt-[2px] leading-[16px]">sgmV at t=</T>
          <Spin v="100" w={20} c="ml-px mt-px h-[20px] w-[44px]" tw="text-[13px] !leading-[17px]" />
          <T w={41} c="mt-[2px] leading-[16px]">= 15.153</T>
          <T w={94} c="ml-[3px] mt-[2px] leading-[16px]">Mesh for rate, Nrate</T>
          <Spin v="260" w={20} c="ml-[6px] mt-px h-[20px] w-[55px]" tw="text-[13px] !leading-[17px]" />
          <T w={22} c="ml-[17px] mt-[2px] leading-[16px]">nV=</T>
          <T w={27} c="ml-[19px] mt-[2px] leading-[16px]">8000</T>
        </div>
      </Group>
      <div className="mt-[7px] flex-none">
        <RateChart />
      </div>
      <div className="mt-[4px] pl-[16px] text-[14px] font-bold italic leading-[20px]">
        <T w={418} c="underline underline-offset-2">{" Calculate Rate for an ansemble with Gaussian conductances"}</T>
      </div>
      <div className="mt-[6px] flex h-[25px] flex-none">
        <Btn c="h-full w-[113px]" t="Run HH" w={47} />
        <Btn c="ml-[7px] h-full w-[114px]" t="Run Thr. Model" w={91} />
      </div>
      <Group t="Set for dispersed conductances" w={189} c="mt-[15px] h-[56px] w-[464px] pl-[7px] pt-[10px] text-[11.5px]">
        <div className="flex h-[20px]">
          <T w={95} c="mt-[4px] leading-[16px]">Ampl_gE, mS/cm^2</T>
          <Spin v="0.01" w={23} c="ml-[2px] h-[21px] w-[48px]" tw="text-[13px] !leading-[17px]" />
          <T w={54} c="ml-[15px] mt-[4px] leading-[16px]">sigmaG_nd</T>
          <Spin v="0.20" w={23} c="ml-[18px] h-[21px] w-[48px]" tw="text-[13px] !leading-[17px]" />
          <T w={36} c="ml-[16px] mt-[4px] leading-[16px]">Iind, pA</T>
          <Spin v="0" w={8} c="ml-[4px] h-[21px] w-[48px]" tw="text-[13px] !leading-[17px]" />
        </div>
        <div className="flex h-[20px]">
          <T w={48} c="mt-[4px] leading-[16px]">tau_E, ms</T>
          <Spin v="0" w={8} c="ml-[49px] h-[21px] w-[48px]" tw="text-[13px] !leading-[17px]" />
          <T w={74} c="ml-[11px] mt-[4px] leading-[16px]">Mesh for Gauss</T>
          <Spin v=" 4" c="ml-[2px] h-[21px] w-[48px]" tw="text-[13px] !leading-[17px]" />
        </div>
      </Group>
      <div className="mt-[2px] flex-none">
        <CondChart />
      </div>
    </div>
  );
}

/* ---------- Desktop ---------- */
function Desktop() {
  return (
    <div className="text-[14px] text-white">
      <div className="absolute left-[6px] top-[2px] flex w-[120px] flex-col items-center">
        <Monitor />
        <T w={103} c="mt-[4px] leading-[18px]">Мой компьютер</T>
      </div>
      <div className="absolute left-[180px] top-[7px] flex w-[120px] flex-col items-center">
        <svg width="42" height="38" viewBox="0 0 42 38">
          <rect x="3" y="1" width="38" height="36" fill="#000" />
          <rect x="3" y="1" width="36" height="35" fill="#c8c8c8" />
          <rect x="5" y="3" width="33" height="5" fill="#0000a0" />
          <path d="M28 4h2v3h-2zM31.500 4h2v3h-2zM35 4h2v3h-2z" fill="#d0d0d0" />
          <rect x="5" y="9" width="33" height="24" fill="#fff" />
          <Shortcut x={2} y={24} />
        </svg>
        <T w={108} c="mt-[4px] leading-[18px]">Dell ResourceCD</T>
      </div>
      <div className="absolute left-[345px] top-[14px] flex w-[125px] flex-col items-center">
        <svg width="42" height="42" viewBox="0 0 42 42">
          <path d="M20 1L39 20 20 39 2 20z" fill="#101008" />
          <path d="M20 3L37 20 20 37 4 20z" fill="none" stroke="#a8b820" strokeWidth="2" />
          <path d="M2 20L10 12V28zM39 20L31 12V28z" fill="#b8b8b8" opacity=".7" />
          <path d="M20 14L12 8M18 17L9 15M18 21L9 24M19 24L13 32M22 14L29 8M23 17L32 15M23 21L32 24M22 24L28 32" stroke="#e0e0e0" strokeWidth="1.300" />
          <ellipse cx="20" cy="17" rx="3" ry="4" fill="#d0d0d0" />
          <ellipse cx="20" cy="22" rx="4.500" ry="5" fill="#48a818" />
          <path d="M22 19.500H18.500V22H21.500V25H18" fill="none" stroke="#e8e840" strokeWidth="1.200" />
          <Shortcut x={1} y={28} />
        </svg>
        <T w={124} c="mt-[4px] leading-[18px]">DrWeb for Windows</T>
      </div>
      <div className="absolute left-[5px] top-[127px] flex w-[120px] flex-col items-center">
        <svg width="40" height="42" viewBox="0 0 40 42">
          <circle cx="14" cy="13" r="12" fill="#3898d8" />
          <path d="M4 6C9 0 15 1 18 2L12 8 14 12 7 16 2 13zM18 8l5-3 3 8-5 6-3-6z" fill="#30a838" />
          <rect x="22" y="4" width="12" height="10" fill="#d8d4c8" />
          <rect x="24" y="6" width="8" height="6" fill="#30b8f0" />
          <path d="M22 15h12l1 4H22z" fill="#c8c4b8" />
          <rect x="4" y="17" width="19" height="15" fill="#e0ddd0" stroke="#706c60" strokeWidth=".6" />
          <rect x="6.500" y="19" width="13" height="10" fill="#38b8f0" />
          <path d="M4 33h18l3 6H3z" fill="#c8c4b8" stroke="#706c60" strokeWidth=".6" />
          <path d="M24 28h8l3-3h4M27 31h11M24 28l4 4" stroke="#103050" fill="none" />
        </svg>
        <T w={84} c="mt-[4px] leading-[18px]">Мое сетевое</T>
        <T w={67} c="leading-[17px]">окружение</T>
      </div>
      <svg className="absolute left-[188px] top-[133px]" width="40" height="42" viewBox="12 0 40 42">
        <rect x="14" y="1" width="36" height="25" fill="#e0ddd0" stroke="#706c60" strokeWidth=".6" />
        <rect x="21" y="4" width="24" height="18" fill="#48d8f0" />
        <path d="M12 27h38v13H12z" fill="#c0bcb0" />
        <Shortcut x={13} y={28} />
      </svg>
      <div className="absolute left-[174px] top-[179px] w-[90px] leading-[17px]">
        <T w={45}>Ярлык </T>
        <div className="pl-[7px]"><T w={46}>Систем</T></div>
      </div>
      <svg className="absolute left-[48px] top-[252px]" width="36" height="20" viewBox="0 0 36 20">
        <path d="M1 8C3 3 9 1 17 2 26 0 33 4 34 8L30 20H5z" fill="#a8a8a8" stroke="#404040" />
        <path d="M4 9l6-6 5 5-4 6zM14 3l7 2-3 7-5-3zM21 4l7 1 3 6-8 2z" fill="#f0f0f0" stroke="#303030" strokeWidth=".8" />
      </svg>
    </div>
  );
}

/* ---------- Taskbar ---------- */
const Q: React.ReactNode[] = [
  <g key="2"><path d="M0 2h14v13H0z" fill="#686868" /><path d="M1 9C1 3 8 0 13 2l3 5-4 3-3-1 1 6H4z" fill="#c83828" stroke="#501010" strokeWidth=".7" /><circle cx="10" cy="5.500" r="1.200" fill="#fff" /></g>,
  <g key="3"><path d="M3 10L9 2l4 1-3 4 5 1L8 14l-5 1 3-4z" fill="#f0d020" stroke="#604000" /><path d="M1 7l5-1M9 11l6-1" stroke="#b08000" strokeWidth="2" /></g>,
  <g key="4"><path d="M0 9l5-3 5-5 6 13-4-1-3-3-3 4z" fill="#d86010" /><path d="M0 9l5-3 2 3-2 3z" fill="#203890" /><path d="M10 1l6 13-4-1z" fill="#701808" /></g>,
  <g key="5"><rect x="1" y="2" width="13" height="13" fill="#fff" stroke="#205860" strokeWidth="1.600" /><path d="M4 6h6v6H4z" fill="#e0d868" /><path d="M6 10L14 1l2 1-8 9z" fill="#202020" /></g>,
  <g key="6"><circle cx="8" cy="9" r="5.300" fill="none" stroke="#2080d8" strokeWidth="2.800" /><path d="M4 9h9" stroke="#2080d8" strokeWidth="2" /><path d="M1 13C-1 9 9 0 15 3" fill="none" stroke="#60b8f8" strokeWidth="1.500" /></g>,
  <g key="7"><rect x="1" y="1" width="14" height="14" fill="#fff" stroke="#305080" /><path d="M4 3l8 8-2 3-7-7z" fill="#d8a890" stroke="#402020" /><path d="M3 12L12 3" stroke="#207070" /></g>,
  <g key="8"><rect x="0" y="2" width="16" height="12" fill="#008080" stroke="#003838" /><rect x="2" y="4" width="12" height="3" fill="#b8f0e0" /><path d="M2 9h12M2 11.500h12" stroke="#fff" strokeDasharray="2 1" /></g>,
  <g key="9"><path d="M1 10L9 5l6 4-7 6z" fill="#d8c000" stroke="#403800" /><path d="M5 4C6 0 13 0 15 6l-3 1C11 4 9 4 8 6z" fill="#f0e040" stroke="#403800" /></g>,
];
const TRAY: React.ReactNode[] = [
  <g key="a"><path d="M2 9l7-4 6 5-7 4z" fill="#e8e8e8" stroke="#303030" /><path d="M13 1L4 6M8 7H2V2" stroke="#108020" strokeWidth="2.500" fill="none" /><path d="M5 12l5 3" stroke="#108020" strokeWidth="1.500" /></g>,
  <g key="b"><path d="M4 6h3l4-5v14L7 10H4z" fill="#f0e020" stroke="#303000" /><path d="M13 4v8" stroke="#fff" /></g>,
  <g key="c"><circle cx="7" cy="8" r="6" fill="#3060a8" /><circle cx="6" cy="7" r="2.500" fill="#a8d0f0" /><path d="M9 10l5 5" stroke="#102840" strokeWidth="2" /></g>,
  <g key="d"><circle cx="8" cy="8" r="6.300" fill="#e8b0b0" stroke="#e01020" strokeWidth="2.600" /><path d="M4 12l8-8" stroke="#e01020" strokeWidth="2.600" /></g>,
  <g key="e"><rect x="1" y="1" width="9" height="7" fill="#60c8c0" stroke="#104040" /><path d="M2 11h8" stroke="#404040" strokeWidth="2" /><path d="M9 9l6 6M15 9l-6 6" stroke="#e00010" strokeWidth="2" /></g>,
  <g key="f"><rect x="1" y="3" width="4" height="12" fill="#008080" stroke="#002020" /><rect x="5" y="2" width="4" height="13" fill="#f0d840" stroke="#302000" /><path d="M10 4l5 2v9h-5z" fill="#40a040" stroke="#002000" /></g>,
  <g key="g"><path d="M0 3h7l1 1 1-1h7v12H0z" fill="#801818" /><path d="M1 2h6v11H1zM9 2h6v11H9z" fill="#fff" /><path d="M2 5h4M2 7h4M2 9h4M10 5h4M10 7h4M10 9h4" stroke="#909090" /></g>,
  <g key="h"><rect x="0" y="0" width="16" height="16" fill="#000080" /><text x="1" y="12.500" fontSize="11" fill="#fff" textLength="14" lengthAdjust="spacingAndGlyphs">EN</text></g>,
  <g key="i" fill="#e8e8e8" stroke="#202020">{[0, 45, 90, 135, 180, 225, 270, 315].map((a) => <ellipse key={a} cx="8" cy="3.800" rx="2" ry="3" transform={`rotate(${a} 8 8)`} />)}</g>,
  <g key="j"><rect x="1" y="1" width="9" height="7" fill="#60c8c0" stroke="#104040" /><path d="M2 11h8" stroke="#404040" strokeWidth="2" /><path d="M9 9l6 6M15 9l-6 6" stroke="#e00010" strokeWidth="2" /></g>,
];

function Taskbar() {
  const task = "flex h-[23px] w-[160px] flex-none items-center pl-[3px] text-[14px]";
  return (
    <div className="absolute bottom-0 left-0 flex h-[30px] w-[1400px] items-center border-t border-[#dcdcdc] bg-[#c0c0c0] pb-px pl-[2px] pt-[2px] shadow-[inset_0_1px_0_#ffffff]">
      <div className={"flex h-[23px] w-[62px] flex-none items-center pl-[4px] " + RAISED}>
        <svg width="17" height="15" viewBox="0 0 17 15">
          <path d="M0 3h3M0 6h3M0 9h3M1 12h3" stroke="#000" strokeWidth="1.500" strokeDasharray="1.500 .8" />
          <path d="M4 2q6-3 13 0v12q-6-3-13 0z" fill="#000" />
          <path d="M5 3q3-2 5-1v5q-2-1-5 0z" fill="#e02020" />
          <path d="M11 2q3 0 5 1v5q-2-1-5-1z" fill="#20b020" />
          <path d="M5 8q3-1 5-0.500v5q-2-1-5 0z" fill="#2848e0" />
          <path d="M11 8q3 0 5 1v4q-2-1-5-1z" fill="#f0e020" />
        </svg>
        <T w={35} c="ml-[2px] text-[14px] font-bold">Пуск</T>
      </div>
      <div className="ml-[5px] h-[20px] w-[3px] border border-t-white border-l-white border-r-[#808080] border-b-[#808080]" />
      <div className="ml-[9px] flex gap-[7px]">
        <Floppy />
        {Q.map((g, i) => (
          <svg key={i} width="16" height="16" viewBox="0 0 16 16">{g}</svg>
        ))}
      </div>
      <div className="ml-[21px] h-[22px] w-[2px] border-l border-r border-l-[#808080] border-r-white" />
      <div className="ml-[2px] h-[20px] w-[3px] border border-t-white border-l-white border-r-[#808080] border-b-[#808080]" />
      <div className="ml-[4px] flex gap-[3px]">
        <div className={task + " " + RAISED}>
          <Floppy />
          <T w={132} c="ml-[3px] pt-px">Windows Command...</T>
        </div>
        <div className={task + " " + RAISED}>
          <svg width="16" height="16" viewBox="0 0 16 16">
            <path d="M2 15h12l-2-4H5z" fill="#fff" stroke="#404040" strokeWidth=".7" />
            <path d="M1 5h14M3 2l10 9M13 2L3 11" stroke="#801010" strokeWidth="1.300" />
            <circle cx="4.500" cy="7" r="3" fill="none" stroke="#a01818" strokeWidth="1.500" />
            <circle cx="11.500" cy="7" r="3" fill="none" stroke="#a01818" strokeWidth="1.500" />
          </svg>
          <T w={126} c="ml-[3px] pt-px">Pop_Single_noAH...</T>
        </div>
        <div className={task + " " + RAISED}>
          <Ball />
          <T w={132} c="ml-[3px] pt-px">Tecplot: nu(t)_noA...</T>
        </div>
        <div className={task + " border border-t-black border-l-black border-r-white border-b-white bg-[#dfdfdf] shadow-[inset_1px_1px_0_#808080]"}>
          <Delphi />
          <T w={59} c="ml-[4px] pt-px font-bold">Project1</T>
        </div>
      </div>
      <div className={"ml-auto mr-[2px] flex h-[23px] w-[243px] flex-none items-center pl-[2px] " + SUNK}>
        {TRAY.map((g, i) => (
          <svg key={i} className="mr-[2px] flex-none" width="16" height="16" viewBox="0 0 16 16">{g}</svg>
        ))}
        <T w={28} c="ml-[17px] pt-px text-[14px]">9:52</T>
      </div>
    </div>
  );
}

export default function App() {
  return (
    <div className="relative h-[1050px] w-[1400px] overflow-hidden bg-[#3a6ea5] font-['Liberation_Sans',Arial,sans-serif] text-[13px] leading-none text-black">
      <Desktop />
      <div className={"absolute left-[1000px] top-[2px] h-[889px] w-[400px] " + FRAME}>
        <div className="h-[18px] bg-[#b4b4b4]" />
        <div className="mt-[20px] h-[25px] border-b border-t border-b-[#808080] border-t-white" />
      </div>
      <div className={"absolute left-[300px] top-[700px] flex h-[317px] w-[600px] flex-col justify-end " + FRAME}>
        <div className={"mb-px ml-px flex h-[24px] w-[254px] items-center pl-[98px] text-[13.5px] font-bold " + SUNK}>
          <T w={153}>{"e:\\Anton\\Hodgkin\\Lyle"}</T>
        </div>
      </div>
      <Form4 />
      <Tecplot />
      <Project1 />
      <Form7 />
      <Taskbar />
    </div>
  );
}
